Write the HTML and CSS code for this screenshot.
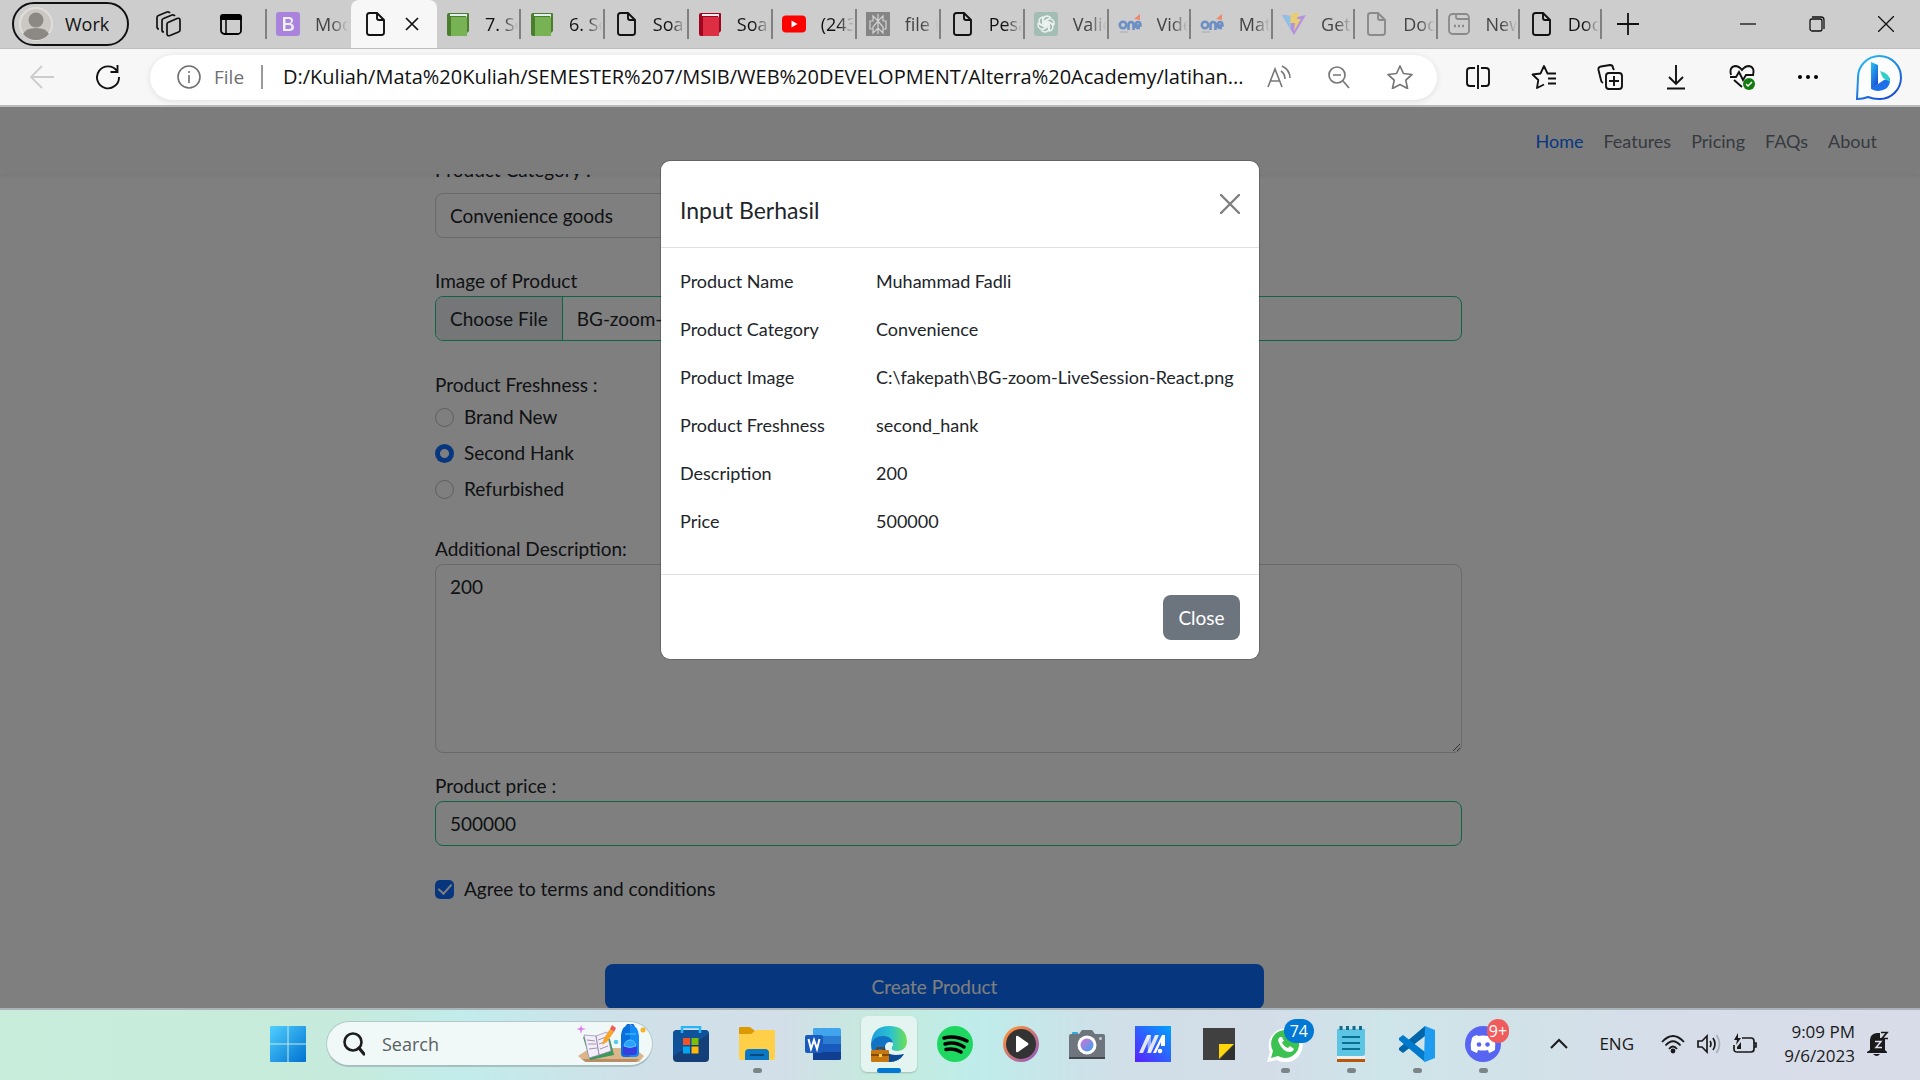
FILE: index.html
```html
<!DOCTYPE html>
<html lang="en">
<head>
<meta charset="utf-8">
<title>Create Product</title>
<link rel="stylesheet" href="styles.css">
</head>
<body>
<svg class="sprite" aria-hidden="true">
  <symbol id="doc" viewBox="0 0 24 24"><path d="M4 3.500Q4 1 6.500 1H14l7 7v12.500q0 2.500-2.500 2.500h-12Q4 23 4 20.500zM14 1v5q0 2 2 2h5" fill="none" stroke="currentColor" stroke-width="1.900"/></symbol>
  <symbol id="book" viewBox="0 0 24 24"><path d="M3 1h19q1 0 1 1v17l-2 2V4H3z" fill="var(--dark)"/><path d="M4 2h17v2H4z" fill="#e4eef2"/><path d="M1 3q0-2 2-2v3h17v20H3q-2 0-2-2z" fill="var(--dark)"/><path d="M5 5h16v19H5z" fill="var(--main)"/></symbol>
  <symbol id="one" viewBox="0 0 24 24"><path d="M16 7l6-5v6z" fill="#ee8a6a"/><g fill="none" stroke="#6d8fc4" stroke-width="2.600"><circle cx="5" cy="13" r="3.200"/><path d="M10.500 18v-5q0-3 2.500-3t2.500 3v5M17.500 13.500h5q0-3.500-2.500-3.500t-2.500 3.200q0 3.300 4.500 2.800"/></g><path d="M2 20h8" stroke="#aaa"/></symbol>
</svg>

<header class="tabstrip">
  <div class="strip-tools">
    <button class="profile" type="button">
      <svg width="34" height="34" viewBox="0 0 34 34"><circle cx="17" cy="17" r="16" fill="#cbc8c4" stroke="#e0ded9" stroke-width="2"/><circle cx="17" cy="13" r="7.500" fill="#8c8884"/><path d="M4 27q3-6 13-6t13 6q-5 6-13 6T4 27z" fill="#8c8884"/></svg>
      <span>Work</span>
    </button>
    <button class="plain" type="button" aria-label="Workspaces"><svg width="26" height="26" viewBox="0 0 26 26" fill="none" stroke="#111" stroke-width="1.700" stroke-linejoin="round"><path d="M13 11.500l9-4q3-1 3 2V19q0 1.500-1.500 2L15 24.500q-3 1-3-2V13q0-1 1-1.500z"/><path d="M9 21q-2 0-2-2V9.500Q7 8 8.500 7.500L17 4q2-.5 3 1"/><path d="M4 18q-2 0-2-2.500V6.500Q2 5 3.500 4.500L12 1q2-.5 3 1"/></svg></button>
    <button class="plain" type="button" aria-label="Tab actions"><svg width="24" height="24" viewBox="0 0 24 24"><rect x="2" y="3" width="20" height="19" rx="3.500" fill="none" stroke="#000" stroke-width="1.800"/><path d="M1 8V5q0-3 3-3h16q3 0 3 3v3z"/><path d="M7 8v14" stroke="#000" stroke-width="1.500"/></svg></button>
  </div>
  <nav class="tabs" aria-label="Tabs">
    <a class="tab dim" href="#"><svg class="fav" viewBox="0 0 24 24"><rect width="24" height="24" rx="3" fill="#a983dc"/><path d="M7 5h6q4 0 4 3.500 0 2-2 3 3 1 3 3.700Q18 19 13 19H7zM9.500 7v4H13q2 0 2-2t-2-2zM9.500 13v4H13q2.500 0 2.500-2T13 13z" fill="#eee" fill-rule="evenodd"/></svg><span>Modal</span></a>
    <a class="tab active" href="#"><svg class="fav" viewBox="0 0 24 24"><use href="#doc"/></svg><svg class="tab-x" viewBox="0 0 14 14"><path d="M1 1l12 12M13 1L1 13" stroke="#111" stroke-width="1.700"/></svg></a>
    <a class="tab" href="#"><svg class="fav green" viewBox="0 0 24 24"><use href="#book"/></svg><span>7. Soal</span></a>
    <a class="tab" href="#"><svg class="fav green" viewBox="0 0 24 24"><use href="#book"/></svg><span>6. Soal</span></a>
    <a class="tab" href="#"><svg class="fav" viewBox="0 0 24 24"><use href="#doc"/></svg><span>Soal</span></a>
    <a class="tab" href="#"><svg class="fav red" viewBox="0 0 24 24"><use href="#book"/></svg><span>Soal</span></a>
    <a class="tab" href="#"><svg class="fav" viewBox="0 0 24 24"><rect y="3.500" width="24" height="17" rx="4" fill="#f00"/><path d="M9.500 8.500l6 3.500-6 3.500z" fill="#fff"/></svg><span>(243)</span></a>
    <a class="tab dim" href="#"><svg class="fav" viewBox="0 0 24 24"><path fill="#858585" d="M0 0h24v24H0z"/><path d="M12 2v20M12 9L7 4v5H4v8h3v4l5-5 5 5v-4h3V9h-3V4zM12 9l-5 6v2M12 9l5 6v2" fill="none" stroke="#d2d2d2" stroke-width="1.200"/></svg><span>file in</span></a>
    <a class="tab" href="#"><svg class="fav" viewBox="0 0 24 24"><use href="#doc"/></svg><span>Pesan</span></a>
    <a class="tab dim" href="#"><svg class="fav" viewBox="0 0 24 24"><rect width="24" height="24" rx="3" fill="#a3bdb5"/><g fill="none" stroke="#eef3f1" stroke-width="1.400"><path id="petal" d="M9 14V8.500q0-4 4-4.500 2 0 3.500 1.500L11 9v5"/><use href="#petal" transform="rotate(60 12 12)"/><use href="#petal" transform="rotate(120 12 12)"/><use href="#petal" transform="rotate(180 12 12)"/><use href="#petal" transform="rotate(240 12 12)"/><use href="#petal" transform="rotate(300 12 12)"/></g></svg><span>Validasi</span></a>
    <a class="tab dim" href="#"><svg class="fav" viewBox="0 0 24 24"><use href="#one"/></svg><span>Video</span></a>
    <a class="tab dim" href="#"><svg class="fav" viewBox="0 0 24 24"><use href="#one"/></svg><span>Materi</span></a>
    <a class="tab dim" href="#"><svg class="fav" viewBox="0 0 24 24"><path d="M0 3l12 20L24 3l-9 2-6-1z" fill="#b492e0"/><path d="M0 3l9 1v14z" fill="#8fc0e6"/><path d="M9 2l8-2-2 7h4l-7 12 1-8H8z" fill="#e8cd72"/></svg><span>Getting</span></a>
    <a class="tab dim" href="#"><svg class="fav faint" viewBox="0 0 24 24"><use href="#doc"/></svg><span>Document</span></a>
    <a class="tab dim" href="#"><svg class="fav faint" viewBox="0 0 24 24" fill="none" stroke="currentColor" stroke-width="1.800"><rect x="2" y="2" width="20" height="20" rx="3.500"/><path d="M9 2v3q0 2 2 2h11"/><path d="M7 14h2M11 14h2M15 14h2" stroke-width="2.500"/></svg><span>New tab</span></a>
    <a class="tab" href="#"><svg class="fav" viewBox="0 0 24 24"><use href="#doc"/></svg><span>Document</span></a>
  </nav>
  <div class="window-controls">
    <button class="plain new-tab" type="button" aria-label="New tab"><svg width="22" height="22" viewBox="0 0 22 22"><path d="M11 0v22M0 11h22" stroke="#111" stroke-width="1.800"/></svg></button>
    <button class="plain" type="button" aria-label="Minimize"><svg width="16" height="16" viewBox="0 0 16 16"><path d="M0 8h16" stroke="#111" stroke-width="1.300"/></svg></button>
    <button class="plain" type="button" aria-label="Restore"><svg width="16" height="16" viewBox="0 0 16 16" fill="none" stroke="#111" stroke-width="1.300"><rect x="1" y="3" width="12" height="12" rx="2"/><path d="M3 1h9q3 0 3 3v9"/></svg></button>
    <button class="plain" type="button" aria-label="Close window"><svg width="16" height="16" viewBox="0 0 16 16"><path d="M0 0l16 16M16 0L0 16" stroke="#111" stroke-width="1.300"/></svg></button>
  </div>
</header>

<div class="toolbar">
  <div class="history">
    <button class="plain" type="button" aria-label="Back"><svg width="24" height="24" viewBox="0 0 24 24" fill="none" stroke="#ccc" stroke-width="1.800"><path d="M24 12H1M12 1L1 12l11 11"/></svg></button>
    <button class="plain" type="button" aria-label="Refresh"><svg width="24" height="26" viewBox="0 0 24 26" fill="none" stroke="#111" stroke-width="1.900"><path d="M21 7A11 11 0 1 0 23 13M21.500 1v7h-7"/></svg></button>
  </div>
  <div class="address">
    <svg width="24" height="24" viewBox="0 0 24 24" fill="none" stroke="#707070" stroke-width="1.600"><circle cx="12" cy="12" r="11"/><path d="M12 10v8M12 6v2"/></svg>
    <span class="scheme">File</span>
    <input class="url" type="text" aria-label="Address" value="D:/Kuliah/Mata%20Kuliah/SEMESTER%207/MSIB/WEB%20DEVELOPMENT/Alterra%20Academy/latihan...">
    <svg width="24" height="24" viewBox="0 0 24 24" fill="none" stroke="#777" stroke-width="1.600"><path d="M1 22L8 4l7 18M4 16h8M14 6q4 3 4 8M15 1q8 4 8 12"/></svg>
    <svg width="22" height="24" viewBox="0 0 22 24" fill="none" stroke="#777" stroke-width="1.700"><circle cx="9" cy="10" r="8"/><path d="M5 10h8M15 16l6 7"/></svg>
    <svg width="26" height="24" viewBox="0 0 26 24" fill="none" stroke="#777" stroke-width="1.700" stroke-linejoin="round"><path d="M13 1l3.500 7.500 8.500 1-6.200 5.700 1.700 8.300-7.500-4-7.500 4 1.700-8.300L1 9.500l8.500-1z"/></svg>
  </div>
  <div class="actions">
    <button class="plain" type="button" aria-label="Split screen"><svg width="24" height="24" viewBox="0 0 24 24" fill="none" stroke="#111" stroke-width="1.900"><path d="M9 3H4Q1 3 1 6v12q0 3 3 3h5M15 3h5q3 0 3 3v12q0 3-3 3h-5M12 0v24"/></svg></button>
    <button class="plain" type="button" aria-label="Favorites"><svg width="26" height="24" viewBox="0 0 26 24" fill="none" stroke="#111" stroke-width="1.800" stroke-linejoin="round"><path d="M13 19.500L6 23l1.300-8L1.500 9.500l8-1L13 1l3.500 7.500H25M17 13.500h8M17 18.500h8"/></svg></button>
    <button class="plain" type="button" aria-label="Collections"><svg width="26" height="26" viewBox="0 0 26 26" fill="none" stroke="#111" stroke-width="1.900"><rect x="9" y="9" width="16" height="16" rx="3"/><path d="M17 12v10M12 17h10M6 19q-2-1-2-3L1.500 6Q1 3 4 2.500L13 1q3 0 3 3l1 2"/></svg></button>
    <button class="plain" type="button" aria-label="Downloads"><svg width="20" height="26" viewBox="0 0 20 26" fill="none" stroke="#111" stroke-width="1.900"><path d="M10 1v19M3 13l7 7 7-7M1 24.500h18"/></svg></button>
    <button class="plain" type="button" aria-label="Browser essentials"><svg width="26" height="26" viewBox="0 0 26 26" fill="none" stroke="#111" stroke-width="1.900"><path d="M2 11Q0 3 6 2q4 0 7 4 3-4 7-4 6 1 4 9M1 13h6l3-5 4 8 3-5h8M5 16l8 7"/><circle cx="20" cy="20" r="6" fill="#107c10" stroke="none"/><path d="M17 20l2 2 4-4" stroke="#fff" stroke-width="1.500"/></svg></button>
    <button class="plain" type="button" aria-label="Settings and more"><svg width="24" height="24" viewBox="0 0 24 24"><circle cx="4" cy="12" r="2"/><circle cx="12" cy="12" r="2"/><circle cx="20" cy="12" r="2"/></svg></button>
    <button class="plain bing" type="button" aria-label="Bing"><svg width="46" height="46" viewBox="0 0 46 46"><defs><linearGradient id="bg1" x1="0" y1="0" x2=".6" y2="1"><stop offset="0" stop-color="#27c5f3"/><stop offset="1" stop-color="#1a4fd6"/></linearGradient></defs><path d="M1 45l1-21A21.500 21.500 0 1 1 23 45q-6 0-11-2-5 2-11 2z" fill="#fbfdff" stroke="url(#bg1)" stroke-width="2"/><path d="M15 8l7 3v19l-7 5z" fill="url(#bg1)"/><path d="M15 34l7-4 6-4 6-2q1 12-12 13-7-1-7-3z" fill="#1f6fe8"/><path d="M24 17l3 7 7 4q1-8-10-11z" fill="#2ed0c6"/></svg></button>
  </div>
</div>

<div class="viewport">
  <nav class="navbar" aria-label="Site">
    <a class="current" href="#">Home</a><a href="#">Features</a><a href="#">Pricing</a><a href="#">FAQs</a><a href="#">About</a>
  </nav>
  <form class="product-form">
    <div class="field category">
      <label for="category">Product Category :</label>
      <select id="category"><option>Convenience goods</option></select>
    </div>
    <div class="field image">
      <label for="image">Image of Product</label>
      <input class="valid" id="image" type="file">
    </div>
    <fieldset class="freshness">
      <legend>Product Freshness :</legend>
      <label class="choice"><input type="radio" name="fresh">Brand New</label>
      <label class="choice"><input type="radio" name="fresh" checked>Second Hank</label>
      <label class="choice"><input type="radio" name="fresh">Refurbished</label>
    </fieldset>
    <div class="field description">
      <label for="description">Additional Description:</label>
      <textarea id="description">200</textarea>
    </div>
    <div class="field price">
      <label for="price">Product price :</label>
      <input class="valid" id="price" type="text" value="500000">
    </div>
    <label class="choice agree"><input type="checkbox" checked>Agree to terms and conditions</label>
    <button class="submit" type="submit">Create Product</button>
  </form>

  <div class="backdrop">
    <section class="modal" role="dialog" aria-labelledby="modal-title">
      <header class="modal-header">
        <h5 id="modal-title">Input Berhasil</h5>
        <button class="plain" type="button" aria-label="Close dialog"><svg width="20" height="20" viewBox="0 0 20 20"><path d="M1 1l18 18M19 1L1 19" stroke="#7f7f7f" stroke-width="2.400" stroke-linecap="round"/></svg></button>
      </header>
      <div class="modal-body">
        <table>
          <tr><th scope="row">Product Name</th><td>Muhammad Fadli</td></tr>
          <tr><th scope="row">Product Category</th><td>Convenience</td></tr>
          <tr><th scope="row">Product Image</th><td>C:\fakepath\BG-zoom-LiveSession-React.png</td></tr>
          <tr><th scope="row">Product Freshness</th><td>second_hank</td></tr>
          <tr><th scope="row">Description</th><td>200</td></tr>
          <tr><th scope="row">Price</th><td>500000</td></tr>
        </table>
      </div>
      <footer class="modal-footer"><button class="close-btn" type="button">Close</button></footer>
    </section>
  </div>
</div>

<footer class="taskbar">
  <button class="plain start" type="button" aria-label="Start"><svg width="36" height="36" viewBox="0 0 36 36"><defs><linearGradient id="win" x1="0" y1="0" x2="1" y2="1"><stop offset="0" stop-color="#4fd0ff"/><stop offset="1" stop-color="#0071d0"/></linearGradient></defs><path d="M1 0h16.500v17.500H0V1q0-1 1-1zM18.500 0H35q1 0 1 1v16.500H18.500zM0 18.500h17.500V36H1q-1 0-1-1zM18.500 18.500H36V35q0 1-1 1H18.500z" fill="url(#win)"/></svg></button>
  <label class="search">
    <svg width="22" height="24" viewBox="0 0 22 24" fill="none" stroke="#1d1d1d" stroke-width="2.600"><circle cx="10" cy="10" r="8.500"/><path d="M16 16l5 6" stroke-width="3.200" stroke-linecap="round"/></svg>
    <input type="text" placeholder="Search" aria-label="Search">
    <svg width="70" height="40" viewBox="0 0 70 40"><path d="M1 32l12-8h44l10 8-5 6H8z" fill="#dcb68b"/><path d="M5 35h57l-3 3H9z" fill="#b98e66"/><path d="M6 13l14-1 13 3 4 16-24 5z" fill="#3b9a5b"/><path d="M7 11l12 1 3 19-10 3zM19 12l11-4 4 19-12 4z" fill="#f3effa" stroke="#9583ad" stroke-width=".7"/><path d="M10 16l8 1M11 20l8 0M12 25l8-1M21 16l8-3M22 20l8-3M23 25l8-3" stroke="#a093ac"/><path d="M25 21l2-7L33 5l4 3-7 10z" fill="#f6a72b"/><path d="M33 5l2-4 4 3-2 4z" fill="#ef5c56"/><path d="M4 1l1 3 4 1-4 1-1 4-1-4-4-1 4-1z" fill="#e07af5"/><circle cx="39" cy="18" r="2.300" fill="#55cce9"/><circle cx="66" cy="6" r="2.500" fill="#f7b221"/><path d="M49 3q5-7 8 0" fill="none" stroke="#1c5fc5" stroke-width="2"/><path d="M44 12Q45 1 53 1t9 11v17q0 4-4 4H48q-4 0-4-4z" fill="#128bf5"/><path d="M44 12Q45 1 53 1v32h-5q-4 0-4-4z" fill="#0870dc"/><path d="M46 24q1-8 7-8t7 8v4q0 3-3 3h-8q-3 0-3-3z" fill="#383de0"/><path d="M47 22q1-6 6-6t6 6q-6 3-12 0zM48 10h11" fill="#2ba3fb" stroke="#56c6ff"/></svg>
  </label>
  <div class="apps">
    <button class="app" type="button" aria-label="Store"><svg viewBox="0 0 36 36"><rect y="4" width="36" height="32" rx="4" fill="#153f78"/><path d="M0 8q0-4 4-4h28q4 0 4 4L0 30z" fill="#0d5ba8" opacity=".7"/><path d="M9 7V1h18v6" fill="none" stroke="#28b5f5" stroke-width="2.500"/><path fill="#f35325" d="M10 12h7v7h-7z"/><path fill="#81bc06" d="M18.500 12h7v7h-7z"/><path fill="#05a6f0" d="M10 20.500h7v7h-7z"/><path fill="#ffba08" d="M18.500 20.500h7v7h-7z"/></svg></button>
    <button class="app open" type="button" aria-label="File Explorer"><svg viewBox="0 0 36 36"><path d="M0 2q0-1 1-1h10l5 4v5H0z" fill="#dd9a00"/><path d="M0 8h12l5-4h18q1 0 1 1v27q0 2-2 2H2q-2 0-2-2z" fill="#ffcf48"/><path d="M6 34V27q0-4 4-4h16q4 0 4 4v7z" fill="#0b78c5"/><path d="M11 29h14" stroke="#07497d" stroke-width="2"/></svg></button>
    <button class="app" type="button" aria-label="Word"><svg viewBox="0 0 36 36"><path fill="#41a5ee" d="M9 2h25q2 0 2 2v6H8V3z"/><path fill="#2b7cd3" d="M8 10h28v8H8z"/><path fill="#185abd" d="M8 18h28v8H8z"/><path fill="#103f91" d="M8 26h28v7q0 1-2 1H8z"/><rect y="9" width="18" height="18" rx="2" fill="#185abd"/><path d="M3.500 13l2.500 10L9 14l3 9 2.500-10" fill="none" stroke="#fff" stroke-width="2"/></svg></button>
    <button class="app current-app" type="button" aria-label="Edge"><svg viewBox="0 0 36 36"><defs><linearGradient id="edge"><stop offset="0" stop-color="#1e9bdf"/><stop offset=".55" stop-color="#2cc3cf"/><stop offset="1" stop-color="#6fe052"/></linearGradient></defs><path d="M0 18Q1 0 18 0t18 15q0 9-9 10-8 0-6-4 3-5-2-8-9-5-19 5z" fill="url(#edge)"/><path d="M0 18q4-9 13-8 8 1 9 7-6-3-8 3-1 7 5 10 6 3 14-2-5 8-15 8Q0 35 0 18z" fill="#1073c4"/><path d="M14 19q-1 13 19 9-5 8-15 8Q9 32 14 19z" fill="#0c4a93"/><rect y="24" width="18" height="12" rx="1" fill="#c87710"/><path d="M6 24v-2h6v2M0 29h18" fill="none" stroke="#6c3d08" stroke-width="1.500"/><path fill="#ffd24a" d="M8 28h3v3H8z"/></svg></button>
    <button class="app" type="button" aria-label="Spotify"><svg viewBox="0 0 36 36"><circle cx="18" cy="18" r="18" fill="#1ed760"/><path d="M7 12q11-3 23 3M8 18q10-3 19 3M9 23.500q8-2 15 2.500" fill="none" stroke="#000" stroke-width="3.500" stroke-linecap="round"/></svg></button>
    <button class="app" type="button" aria-label="Media Player"><svg viewBox="0 0 36 36"><defs><linearGradient id="mp" x1="0" y1="0" x2="1" y2="1"><stop offset=".2" stop-color="#f58b45"/><stop offset="1" stop-color="#8a55c8"/></linearGradient></defs><circle cx="18" cy="18" r="18" fill="url(#mp)"/><circle cx="18" cy="18" r="15" fill="#333"/><path d="M13 11q0-2 2-1l10 7q1 1 0 2l-10 7q-2 1-2-1z" fill="#fff"/></svg></button>
    <button class="app" type="button" aria-label="Camera"><svg viewBox="0 0 36 36"><defs><linearGradient id="lens" x1="0" y1="0" x2="1" y2="1"><stop offset=".2" stop-color="#b67bdc"/><stop offset="1" stop-color="#34a6ed"/></linearGradient></defs><rect x="3" y="6" width="6" height="4" rx="1" fill="#2ea9e0"/><path d="M0 10q0-2 2-2h8l3-4h10l3 4h8q2 0 2 2v23H0z" fill="#6e757c"/><path d="M0 31h36v2H0z" fill="#44494e"/><circle cx="18" cy="19" r="9.500" fill="#fff"/><circle cx="18" cy="19" r="6.500" fill="url(#lens)"/><circle cx="31.500" cy="12.500" r="1.500" fill="#c8d0d6"/></svg></button>
    <button class="app" type="button" aria-label="MyASUS"><svg viewBox="0 0 36 36"><defs><linearGradient id="asus" x1="0" y1="1" x2="1" y2="0"><stop offset="0" stop-color="#5b20ff"/><stop offset="1" stop-color="#00a2ff"/></linearGradient></defs><path fill="url(#asus)" d="M0 0h36v36H0z"/><path d="M4 27L12 9h4L8 27zM12 27L20 9h4l-8 18z" fill="#dfe6ff"/><path d="M18 27L27 9h3v11h-4v-4l-5 11z" fill="#fff"/><path d="M12 9h4v15l-3 3z" fill="#fff" opacity=".5"/><circle cx="25" cy="25" r="2.300" fill="#fff"/></svg></button>
    <button class="app" type="button" aria-label="Sticky Notes"><svg viewBox="0 0 36 36"><path d="M2 2h32v32H2z" fill="#404040"/><path d="M19 34h15V18z" fill="#303030"/><path d="M18 18h15L18 33z" fill="#ffd60a"/></svg></button>
    <button class="app open" type="button" aria-label="WhatsApp"><svg viewBox="0 0 36 36"><path d="M0 36l3-10A17 17 0 1 1 10 34z" fill="#fff"/><path d="M4 32l2-7A14 14 0 1 1 11 30z" fill="#3cc251"/><path d="M13 11q-3 2-1 6 4 9 11 9 3 0 4-3l-4-3-2 2q-5-2-6-6l2-1-2-4z" fill="#fff"/></svg><span class="badge blue">74</span></button>
    <button class="app open" type="button" aria-label="Notepad"><svg viewBox="0 0 36 36"><path d="M4 31h28v5H4z" fill="#b9560e"/><path d="M4 30h28v3H4z" fill="#eee"/><path d="M4 3h28v24q0 3-3 3H4z" fill="#5cc5e3"/><path d="M8 0v4M14.500 0v4M21 0v4M27.500 0v4" stroke="#116a8c" stroke-width="3"/><path d="M9 11h18M9 17h18M9 23h18" stroke="#0b6f94" stroke-width="2"/></svg></button>
    <button class="app open" type="button" aria-label="Visual Studio Code"><svg viewBox="0 0 36 36"><path d="M26 0v10L4 27l-4-3v-2z" fill="#0065a9"/><path d="M26 36V26L4 9l-4 3v2z" fill="#007acc"/><path d="M26 0l10 4v28l-10 4-1-1z" fill="#1f9cf0"/></svg></button>
    <button class="app open" type="button" aria-label="Discord"><svg viewBox="0 0 36 36"><circle cx="18" cy="18" r="18" fill="#5865f2"/><path d="M13 10q5-1 10 0l1-1q4 1 5 3 2 6 1 12-3 2-6 3l-1-3q-5 1-10 0l-1 3q-3-1-6-3-1-6 1-12 1-2 5-3z" fill="#fff"/><circle cx="14" cy="18.500" r="2.300" fill="#5865f2"/><circle cx="22.500" cy="18.500" r="2.300" fill="#5865f2"/></svg><span class="badge coral">9+</span></button>
  </div>
  <div class="tray">
    <svg width="18" height="12" viewBox="0 0 18 12" fill="none" stroke="#1a1a1a" stroke-width="2"><path d="M1 10l8-8 8 8"/></svg>
    <span class="lang">ENG</span>
    <div class="status">
      <svg width="24" height="20" viewBox="0 0 24 20" fill="none" stroke="#1a1a1a" stroke-width="1.800"><path d="M1 8Q12-4 23 8M4.500 11.500Q12 3 19.500 11.500M8 15q4-5 8 0"/><circle cx="12" cy="17" r="1.500" fill="#1a1a1a"/></svg>
      <svg width="24" height="20" viewBox="0 0 24 20" fill="none" stroke="#1a1a1a" stroke-width="1.700"><path d="M1 7h4l5-5v16l-5-5H1zM13 7q2 3 0 6M16 4q4 6 0 12"/><path d="M19.500 1q6 9 0 18" stroke="#a9afb9"/></svg>
      <svg width="24" height="22" viewBox="0 0 24 22" fill="none" stroke="#1a1a1a" stroke-width="1.700"><path d="M9 5h9q3 0 3 3v8q0 3-3 3H4q-3 0-3-3v-4M21 10h2v4h-2"/><path d="M5 0L1 7h3l-1 5 5-7H5zM4 16v-2l4-5v7z" fill="#1a1a1a" stroke="none"/></svg>
    </div>
    <div class="clock"><span>9:09 PM</span><span>9/6/2023</span></div>
    <svg width="22" height="26" viewBox="0 0 22 26"><path d="M3 19V9q0-6 7-7h3v5h5v12l2 2v1H0v-1zM6 23h7q-3 4-7 0z" fill="#1a1a1a"/><path d="M14 1.500h6l-5 6h6" fill="none" stroke="#1a1a1a" stroke-width="1.700"/><path d="M8 10.500h6l-5 6h6" fill="none" stroke="#dde" stroke-width="1.500"/></svg>
  </div>
</footer>
<script src="script.js"></script>
</body>
</html>
```
FILE: styles.css
```css
* { box-sizing: border-box; }
body {
  margin: 0;
  height: 100vh;
  display: flex;
  flex-direction: column;
  overflow: hidden;
  font: 19px/30px Lato, sans-serif;
  color: #212529;
}
button, input, select, textarea { font: inherit; color: inherit; margin: 0; }
a { text-decoration: none; color: inherit; }
svg { display: block; flex: none; }
.sprite { display: none; }
.plain { border: 0; background: none; padding: 0; display: flex; align-items: center; justify-content: center; }

/* Browser tabs */
.tabstrip, .toolbar, .taskbar { font-family: "Open Sans", sans-serif; flex: none; }
.tabstrip { display: flex; height: 48px; background: #cdcdcd; font-size: 18px; color: #111; }
.strip-tools { display: flex; align-items: center; width: 265px; padding-left: 12px; gap: 26px; }
.strip-tools .plain:last-child { margin-left: 12px; }
.profile {
  display: flex; align-items: center; gap: 12px;
  width: 117px; height: 44px; padding: 0 0 0 5px;
  border: 2px solid #111; border-radius: 22px; background: none;
}
.tabs { display: flex; flex: 1; min-width: 0; }
.tab {
  display: flex; align-items: center; gap: 15px;
  flex: 84 1 0; min-width: 0; padding: 0 3px 0 9px;
  background: linear-gradient(#808080, #808080) right center / 2px 30px no-repeat;
}
.tab:nth-child(n+11) { flex-grow: 82; }
.tab:first-child {
  padding-left: 11px;
  background: linear-gradient(#808080, #808080) left center / 2px 30px no-repeat;
}
.tab.active { flex: 0 0 86px; gap: 18px; background: #f7f7f7; border-radius: 8px 8px 0 0; padding-left: 12px; }
.tab span {
  flex: 1; min-width: 0; overflow: hidden; white-space: nowrap;
  mask-image: linear-gradient(to right, #000 50%, transparent 100%);
}
.tab.dim span { color: #444; }
.fav { width: 24px; height: 24px; }
.faint { color: #8a8a8a; }
.tab-x { width: 14px; height: 14px; }
.green { --dark: #4a7d2c; --main: #77b255; }
.red { --dark: #a0041e; --main: #dd2e44; }
.window-controls { display: flex; align-items: center; width: 318px; padding-left: 15px; }
.window-controls .plain { width: 69px; height: 46px; }
.window-controls .new-tab { width: 22px; margin-right: 74px; }

/* Address bar */
.toolbar {
  display: flex; align-items: center; height: 59px;
  background: #f7f7f7; border-top: 1px solid #bdbdbd; border-bottom: 2px solid #bbb;
}
.history { display: flex; gap: 42px; width: 150px; padding-left: 30px; }
.address {
  display: flex; align-items: center; gap: 37px; flex: 1; min-width: 0; height: 45px;
  padding: 0 24px 0 27px; background: #fff; border-radius: 23px; box-shadow: 0 1px 6px #0000001a;
}
.address > svg:first-child { margin-right: -24px; }
.scheme { color: #707070; line-height: 24px; width: 49px; border-right: 2px solid #999; margin-right: -17px; }
.url { flex: 1; min-width: 0; border: 0; padding: 0; margin-right: -20px; outline: 0; background: none; font-size: 20px; color: #111; }
.actions { display: flex; align-items: center; width: 483px; padding-left: 8px; }
.actions .plain { width: 66px; height: 44px; }
.actions .bing { margin-left: 5px; }

/* Web page */
.viewport { position: relative; flex: 1; min-height: 0; overflow: hidden; background: #fff; }
.navbar {
  position: relative; z-index: 1;
  display: flex; justify-content: flex-end; align-items: center; gap: 20px;
  height: 67px; padding: 0 43px; background: #f8f9fa; color: #6c757d; font-size: 18px;
  box-shadow: 0 2px 5px #00000013;
}
.navbar .current { color: #0d6efd; }
.product-form {
  width: 1050px; max-width: 100%; margin: -19px auto 0; padding-right: 23px;
  display: flex; flex-direction: column;
}
.field { display: flex; flex-direction: column; }
.field input, .field select, .field textarea {
  width: 100%; height: 45px; padding: 7px 14px; border: 1px solid #ced4da; border-radius: 8px;
  background: #fff; outline: 0; appearance: none; display: block;
}
.category { gap: 8px; width: 50%; }
.image { margin-top: 28px; }
.field .valid { border-color: #1ec985; }
.field input[type=file] { padding: 0; line-height: 43px; overflow: hidden; }
input::file-selector-button {
  font: inherit; color: inherit; height: 43px; padding: 0 14px; margin: 0 14px 0 0;
  border: 0; border-right: 1px solid #1ec985; background: #e9ecef;
}
.freshness { border: 0; margin: 29px 0 0; padding: 0; display: flex; flex-direction: column; gap: 6px; }
legend { padding: 0; margin-bottom: 2px; }
.choice { display: flex; align-items: center; gap: 10px; }
.choice input {
  appearance: none; width: 19px; height: 19px; border: 1px solid #bbb; border-radius: 50%;
}
.choice input:checked { border: 0; background: radial-gradient(circle, #fff 4px, #0d6efd 5px); }
.choice input[type=checkbox]:checked { border-radius: 5px; background: #0d6efd; display: grid; place-items: center; }
.choice input[type=checkbox]::after {
  content: ""; width: 6px; height: 11px; margin-bottom: 4px;
  border: solid #fff; border-width: 0 2px 2px 0; rotate: 42deg;
}
.description { margin-top: 30px; }
.field textarea { height: 189px; resize: vertical; }
.price { margin-top: 18px; }
.agree { margin-top: 28px; }
.submit {
  align-self: center; width: 659px; height: 45px; margin: 60px 28px 0 0;
  border: 0; border-radius: 8px; background: #0d6efd; color: #fff;
}

/* Dialog */
.backdrop { position: absolute; inset: 0; z-index: 2; padding: 54px 16px; background: #00000080; }
.modal { width: 598px; max-width: 100%; margin: 0 auto; background: #fff; border-radius: 9px; box-shadow: 0 0 0 1px #00000030; }
.modal-header { display: flex; align-items: center; justify-content: space-between; height: 87px; padding: 0 19px; border-bottom: 1px solid #dee2e6; }
h5 { margin: 12px 0 0; font-size: 23px; font-weight: 400; }
.modal-body { padding: 9px 19px 29px; font-size: 18px; }
table { width: 100%; border-collapse: collapse; }
th, td { padding: 9px 0; font-weight: 400; text-align: left; white-space: nowrap; }
th { width: 196px; }
.modal-footer { display: flex; justify-content: flex-end; padding: 20px 19px 19px; border-top: 1px solid #dee2e6; }
.close-btn { width: 77px; height: 45px; border: 0; padding: 0; border-radius: 8px; background: #6c757d; color: #fff; }

/* Taskbar */
.taskbar {
  display: flex; align-items: center; height: 72px; padding: 0 31px 2px 270px;
  border-top: 2px solid #aab4b8; font-size: 17px; line-height: 24px; color: #1a1a1a;
  background: linear-gradient(90deg, #c8eddb 0, #c6ebdc 18%, #c1eceb 24%, #d0e0e8 33%, #d2dfe8 41%, #c4ebdc 46%, #bfeceb 51%, #d0dfe8 58%, #d3dde8 66%, #cee5e9 72%, #d2e1e8 80%, #d7dde9 88%, #d8dce9 100%);
}
.search {
  display: flex; align-items: center; gap: 17px; width: 327px; height: 46px; margin: 0 5px 0 20px; padding: 0 5px 0 16px;
  border: 1px solid #b2c9ca; border-bottom: 2px solid #a8bfc0; border-radius: 23px; background: #f0f8f8;
}
.search input { flex: 1; min-width: 0; border: 0; padding: 0; background: none; outline: 0; font-size: 18px; }
.search input::placeholder { color: #5a5f60; opacity: 1; }
.apps { display: flex; }
.app {
  position: relative; display: flex; align-items: center; justify-content: center;
  width: 56px; height: 56px; margin: 0 5px; border: 0; padding: 0; border-radius: 6px; background: none;
}
.app > svg { width: 36px; height: 36px; }
.current-app { background: #e3f4f1; box-shadow: 0 1px 2px #0003; }
.open::after, .current-app::after {
  content: ""; position: absolute; bottom: -1px; left: 24px; width: 9px; height: 5px; border-radius: 3px; background: #7b8588;
}
.current-app::after { left: 16px; width: 24px; background: #0078d4; }
.badge {
  position: absolute; top: 3px; right: -3px; height: 24px; min-width: 22px; padding: 0 6px;
  border-radius: 12px; color: #fff; font-size: 16px; line-height: 24px;
}
.blue { background: #0078d4; right: -1px; }
.coral { background: #f05b5b; padding: 0 1px; right: 2px; }
.tray { display: flex; align-items: center; margin-left: auto; }
.lang { margin: 0 27px 0 31px; }
.status { display: flex; align-items: center; gap: 12px; }
.clock { display: flex; flex-direction: column; text-align: right; width: 98px; margin-right: 12px; }
```
FILE: script.js
```js
// Puts the chosen file into the upload field.
const chosen = new DataTransfer();
chosen.items.add(new File([""], "BG-zoom-LiveSession-React.png"));
document.getElementById("image").files = chosen.files;
```
